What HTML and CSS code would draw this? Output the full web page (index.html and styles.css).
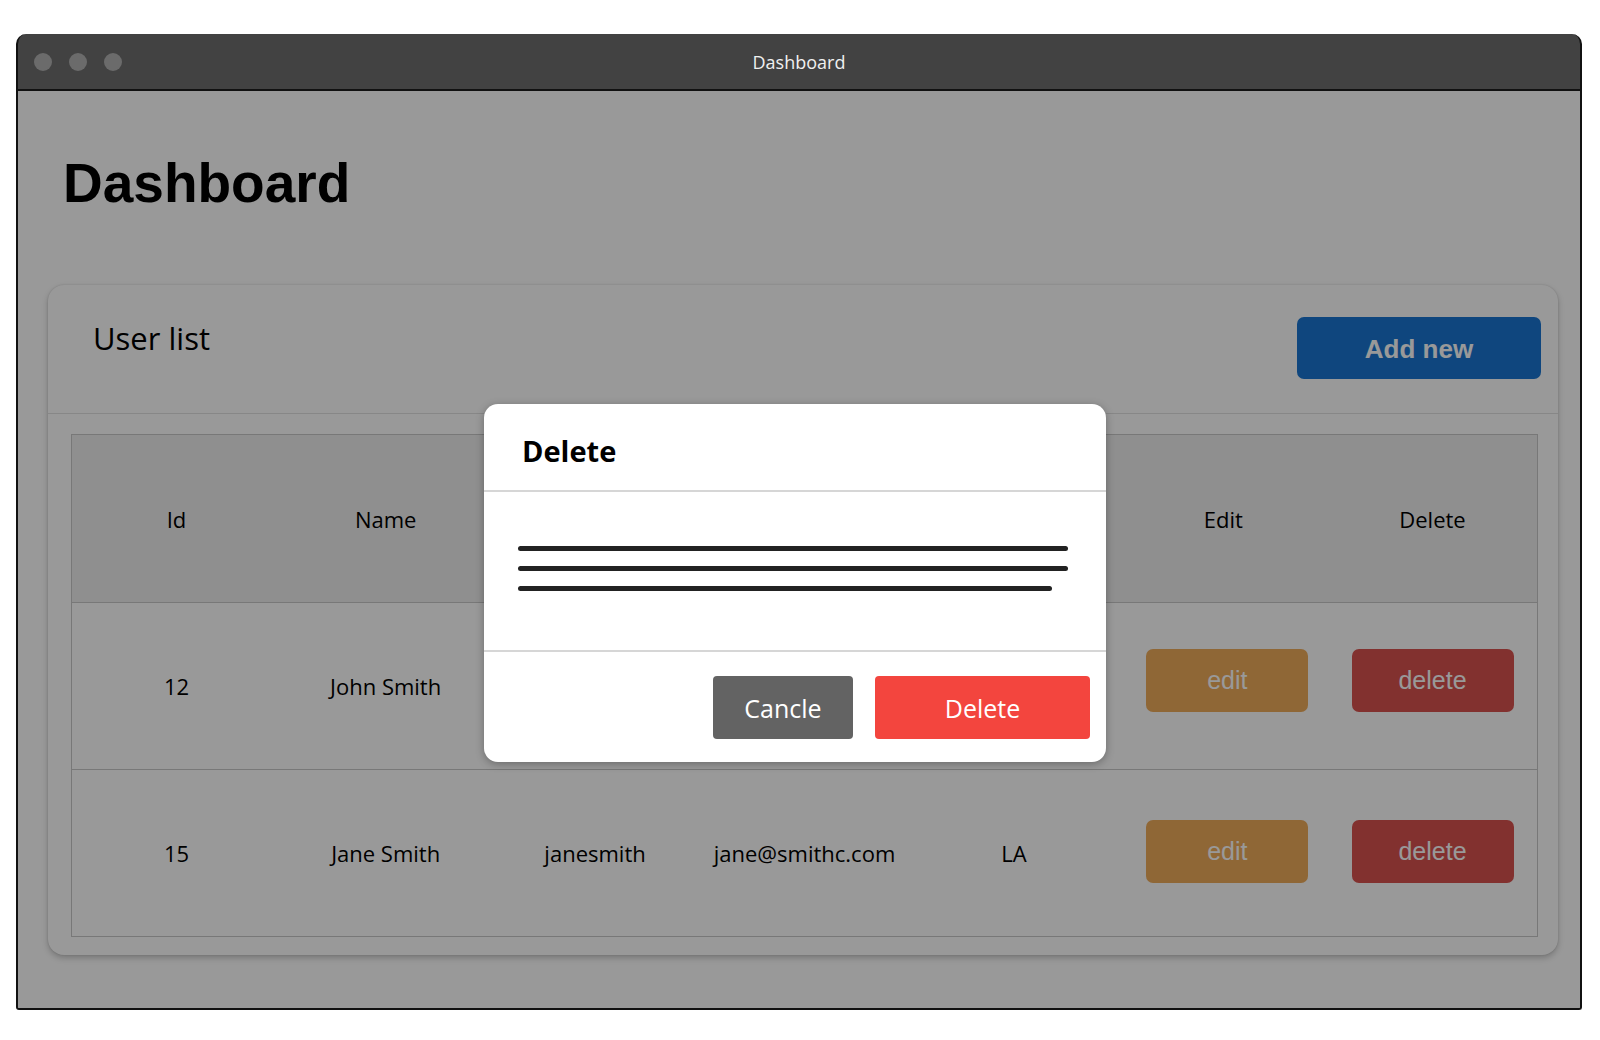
FILE: index.html
```html
<!DOCTYPE html>
<html lang="en">
<head>
<meta charset="UTF-8">
<meta name="viewport" content="width=device-width, initial-scale=1.0">
<title>Dashboard</title>
<link rel="stylesheet" href="styles.css">
</head>
<body>

<div class="window">
    <div class="titlebar">
        <div class="dots"><span></span><span></span><span></span></div>
        <div class="window-title">Dashboard</div>
        <div></div>
    </div>

    <div class="screen">
        <h1 class="page-title">Dashboard</h1>

        <div class="card">
            <div class="card-header">
                <h2>User list</h2>
                <button class="btn-add">Add new</button>
            </div>
            <div class="card-body">
                <table class="users">
                    <thead>
                        <tr>
                            <th>Id</th>
                            <th>Name</th>
                            <th>Username</th>
                            <th>Email</th>
                            <th>City</th>
                            <th>Edit</th>
                            <th>Delete</th>
                        </tr>
                    </thead>
                    <tbody>
                        <tr>
                            <td>12</td>
                            <td>John Smith</td>
                            <td>johnsmith</td>
                            <td>john@smithc.com</td>
                            <td>NY</td>
                            <td><button class="btn-edit">edit</button></td>
                            <td><button class="btn-delete">delete</button></td>
                        </tr>
                        <tr>
                            <td>15</td>
                            <td>Jane Smith</td>
                            <td>janesmith</td>
                            <td>jane@smithc.com</td>
                            <td>LA</td>
                            <td><button class="btn-edit">edit</button></td>
                            <td><button class="btn-delete">delete</button></td>
                        </tr>
                    </tbody>
                </table>
            </div>
        </div>

        <div class="backdrop"></div>

        <div class="modal">
            <div class="modal-header">
                <h3>Delete</h3>
            </div>
            <div class="modal-body">
                <div class="text-line"></div>
                <div class="text-line"></div>
                <div class="text-line short"></div>
            </div>
            <div class="modal-footer">
                <button class="btn-cancel">Cancle</button>
                <button class="btn-confirm">Delete</button>
            </div>
        </div>
    </div>
</div>

</body>
</html>
```

FILE: styles.css
```css
* {
    box-sizing: border-box;
}

body {
    margin: 0;
    padding: 34px 0 0 16px;
    background: #fff;
    font-family: "Open Sans", sans-serif;
}

/* window chrome */

.window {
    width: 1566px;
    height: 976px;
    display: flex;
    flex-direction: column;
    background: #424242;
    border: 2px solid #111;
    border-top: 0;
    border-radius: 10px 10px 3px 3px;
    overflow: hidden;
}

.titlebar {
    height: 57px;
    display: grid;
    grid-template-columns: 1fr auto 1fr;
    align-items: center;
    padding: 0 16px;
    border-bottom: 2px solid #111;
}

.dots {
    display: flex;
    gap: 17px;
}

.dots span {
    width: 18px;
    height: 18px;
    border-radius: 50%;
    background: #6b6b6b;
}

.window-title {
    color: #f0f0f0;
    font-size: 18px;
}

/* page */

.screen {
    flex: 1;
    position: relative;
    background: #fff;
    padding: 61px 22px 0 30px;
}

.page-title {
    margin: 0 0 70px 15px;
    font-family: "Liberation Sans", Arial, sans-serif;
    font-size: 55px;
    line-height: 63px;
    font-weight: bold;
    color: #000;
}

.card {
    height: 670px;
    background: #fff;
    border-radius: 16px;
    box-shadow: 0 3px 6px rgba(0, 0, 0, 0.22), 0 0 2px rgba(0, 0, 0, 0.15);
}

.card-header {
    height: 129px;
    display: flex;
    justify-content: space-between;
    align-items: flex-start;
    padding: 32px 17px 0 45px;
    border-bottom: 1px solid #e2e2e2;
}

.card-header h2 {
    margin: 0;
    font-size: 31px;
    line-height: 42px;
    font-weight: 400;
    color: #000;
}

.btn-add {
    width: 244px;
    height: 62px;
    padding-top: 3px;
    background: #1976d2;
    color: #fff;
    border: none;
    border-radius: 7px;
    font-family: "Liberation Sans", Arial, sans-serif;
    font-size: 26px;
    font-weight: bold;
}

.card-body {
    padding: 20px 20px 0 23px;
}

.users {
    width: 1467px;
    border-collapse: collapse;
    table-layout: fixed;
    border: 1px solid #c8c8c8;
}

.users th,
.users td {
    text-align: center;
    vertical-align: middle;
    font-size: 22px;
    font-weight: 400;
    color: #000;
}

.users th {
    height: 168px;
    background: #eee;
    border-bottom: 1px solid #c8c8c8;
}

.users td {
    height: 167px;
    border-top: 1px solid #c8c8c8;
}

.btn-edit,
.btn-delete {
    width: 162px;
    height: 63px;
    margin-bottom: 4px;
    border: none;
    border-radius: 7px;
    color: #fff;
    font-family: "Liberation Sans", Arial, sans-serif;
    font-size: 25px;
}

.users tbody tr:first-child button {
    margin-bottom: 12px;
}

.btn-edit {
    margin-left: 8px;
    background: #efac5b;
}

.btn-delete {
    background: #d9534f;
}

/* modal */

.backdrop {
    position: absolute;
    inset: 0;
    background: rgba(0, 0, 0, 0.4);
}

.modal {
    position: absolute;
    left: 466px;
    top: 313px;
    width: 622px;
    height: 358px;
    background: #fff;
    border-radius: 14px;
    box-shadow: 0 2px 8px rgba(0, 0, 0, 0.3);
    overflow: hidden;
}

.modal-header {
    height: 88px;
    padding: 27px 0 0 38px;
    border-bottom: 2px solid #d6d6d6;
}

.modal-header h3 {
    margin: 0;
    font-size: 29px;
    line-height: 40px;
    font-weight: bold;
    color: #000;
}

.modal-body {
    height: 160px;
    padding: 54px 0 0 34px;
    border-bottom: 2px solid #d6d6d6;
}

.text-line {
    width: 550px;
    height: 5px;
    margin-bottom: 15px;
    background: #222;
    border-radius: 3px;
}

.text-line.short {
    width: 534px;
}

.modal-footer {
    display: flex;
    justify-content: flex-end;
    gap: 22px;
    padding: 24px 16px 0 0;
}

.btn-cancel,
.btn-confirm {
    height: 63px;
    border: none;
    border-radius: 4px;
    color: #fff;
    font-family: "Open Sans", sans-serif;
    font-size: 25px;
}

.btn-cancel {
    width: 140px;
    background: #636363;
}

.btn-confirm {
    width: 215px;
    background: #f3453e;
}
```
